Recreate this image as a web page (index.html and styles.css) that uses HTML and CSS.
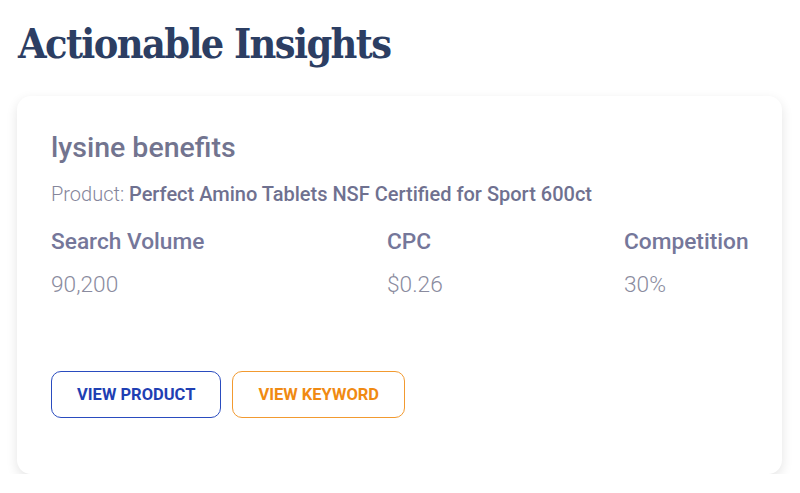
FILE: index.html
```html
<!DOCTYPE html>
<html lang="en">
<head>
    <meta charset="UTF-8">
    <meta name="viewport" content="width=device-width, initial-scale=1.0">
    <title>Actionable Insights</title>
    <link rel="stylesheet" href="styles.css">
</head>
<body>
    <div id="app">
        <h1>Actionable Insights</h1>

        <div class="card">
            <h2 class="keyword">lysine benefits</h2>
            <p class="product">Product: <strong>Perfect Amino Tablets NSF Certified for Sport 600ct</strong></p>

            <div class="stats">
                <div class="stat">
                    <div class="label">Search Volume</div>
                    <div class="value">90,200</div>
                </div>
                <div class="stat">
                    <div class="label">CPC</div>
                    <div class="value">$0.26</div>
                </div>
                <div class="stat">
                    <div class="label">Competition</div>
                    <div class="value">30%</div>
                </div>
            </div>

            <div class="actions">
                <button class="btn btn-product">View Product</button>
                <button class="btn btn-keyword">View Keyword</button>
            </div>
        </div>
    </div>
</body>
</html>
```

FILE: styles.css
```css
body {
    font-family: Roboto, "Liberation Sans", sans-serif;
    margin: 0;
    background: #fff;
}

#app {
    padding: 18px 17px 0 17px;
    width: 765px;
}

h1 {
    font-family: "DejaVu Serif Condensed", "DejaVu Serif", serif;
    font-weight: bold;
    font-size: 41px;
    color: #2c3e63;
    margin: 0 0 26px 1px;
    line-height: 52px;
    letter-spacing: -1.6px;
}

.card {
    background: #fff;
    border-radius: 14px;
    box-shadow: 0 4px 12px rgba(0,0,0,0.11);
    padding: 35px 34px 56px 34px;
}

.keyword {
    font-size: 28.5px;
    font-weight: 500;
    color: #72748f;
    margin: 0;
    line-height: 34px;
}

.product {
    font-size: 20px;
    font-weight: 300;
    color: #85869b;
    margin: 16px 0 0 0;
    line-height: 26px;
}

.product strong {
    font-weight: 500;
    color: #6f7190;
}

.stats {
    display: grid;
    grid-template-columns: 336px 237px auto;
    margin-top: 21px;
}

.label {
    font-size: 22.7px;
    font-weight: 500;
    color: #75779a;
    line-height: 28px;
}

.value {
    font-size: 22.7px;
    font-weight: 300;
    color: #8a8b9e;
    line-height: 28px;
    margin-top: 15px;
}

.actions {
    display: flex;
    gap: 11px;
    margin-top: 72px;
}

.btn {
    font-family: Roboto, sans-serif;
    font-size: 16.5px;
    font-weight: bold;
    text-transform: uppercase;
    background: #fff;
    border-radius: 10px;
    height: 47px;
    padding: 0 25px;
    cursor: pointer;
}

.btn-product {
    color: #1f3fb3;
    border: 1.5px solid #2a4cbf;
}

.btn-keyword {
    color: #f08a12;
    border: 1.5px solid #f29a30;
}
```
